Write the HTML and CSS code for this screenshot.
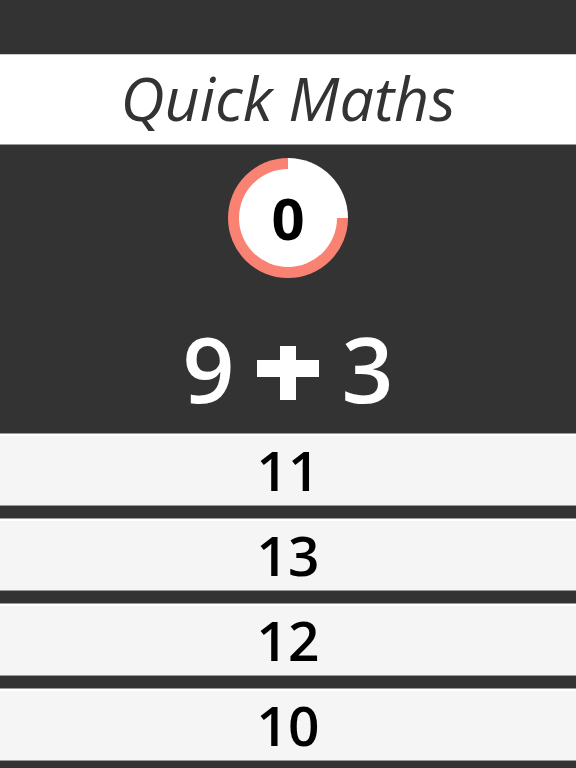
FILE: index.html
```html
<!DOCTYPE html>
<html>
<head>
<meta charset="utf-8">
<link rel="stylesheet" href="styles.css">
</head>
<body>
<div class="topbar"></div>
<header class="header"><h1 class="title">Quick Maths</h1></header>
<section class="stage">
  <div class="timer"><div class="timer-inner">0</div></div>
  <div class="equation"><span class="num">9</span><svg class="plus" width="62" height="54" viewBox="0 0 62 54"><rect x="0" y="14" width="62" height="17" fill="#fff"/><rect x="23" y="0" width="16" height="54" fill="#fff"/></svg><span class="num">3</span></div>
</section>
<div class="answers">
  <button class="answer">11</button>
  <button class="answer">13</button>
  <button class="answer">12</button>
  <button class="answer">10</button>
</div>
</body>
</html>
```
FILE: styles.css
```css
html, body {
  margin: 0;
  padding: 0;
  background: #333333;
  font-family: "Open Sans", "DejaVu Sans", sans-serif;
}
.topbar {
  height: 54px;
}
.header {
  background: #ffffff;
  border-top: 1px solid #c9c9c9;
  border-bottom: 1px solid #9a9a9a;
  height: 89px;
  display: flex;
  align-items: center;
  justify-content: center;
}
.title {
  margin: 0;
  font-style: italic;
  font-weight: 400;
  font-size: 61px;
  line-height: 89px;
  color: #333333;
  position: relative;
  top: -2px;
}
.stage {
  height: 288px;
  display: flex;
  flex-direction: column;
  align-items: center;
  padding-top: 13px;
  box-sizing: border-box;
}
.timer {
  width: 120px;
  height: 120px;
  border-radius: 50%;
  background: conic-gradient(#ffffff 0deg 90deg, #fa8272 90deg 360deg);
  display: flex;
  align-items: center;
  justify-content: center;
}
.timer-inner {
  width: 98px;
  height: 98px;
  border-radius: 50%;
  background: #ffffff;
  color: #000000;
  font-weight: 700;
  font-size: 58px;
  line-height: 98px;
  text-align: center;
}
.equation {
  margin-top: 40px;
  height: 100px;
  line-height: 100px;
  font-size: 91px;
  font-weight: 600;
  color: #ffffff;
  white-space: nowrap;
}
.plus {
  display: inline-block;
  vertical-align: 3px;
  margin: 0 23px 0 22px;
}
.answers {
  display: flex;
  flex-direction: column;
  gap: 12px;
}
.answer {
  display: block;
  width: 100%;
  height: 73px;
  margin: 0;
  padding: 0;
  border: none;
  border-top: 1px solid #9a9a9a;
  border-bottom: 1px solid #9a9a9a;
  box-shadow: inset 0 2px 0 #ffffff;
  background: #f5f5f5;
  font-family: "Open Sans", "DejaVu Sans", sans-serif;
  font-size: 55px;
  font-weight: 600;
  line-height: 71px;
  color: #000000;
  text-align: center;
}
```
